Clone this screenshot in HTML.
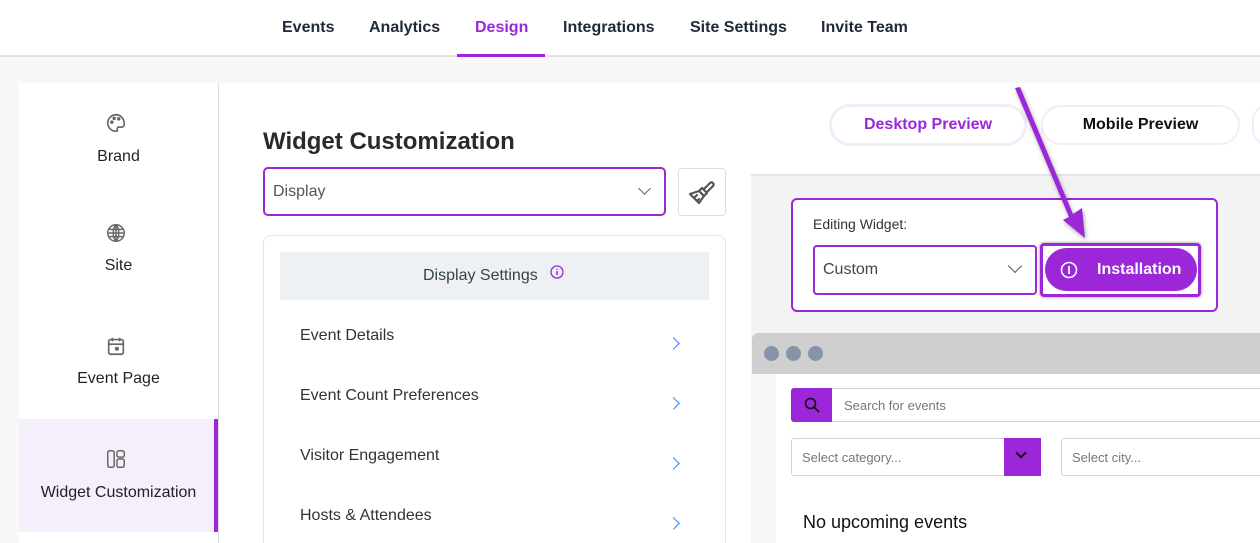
<!DOCTYPE html>
<html style="width:1260px;height:543px;overflow:hidden"><head><style>
*{box-sizing:border-box;margin:0;padding:0}
body{width:1260px;height:543px;overflow:hidden;background:#f8f8f9;font-family:"Liberation Sans",sans-serif;position:relative;color:#222}
.abs{position:absolute}
.nav{left:0;top:0;width:1260px;height:57px;background:#fff;border-bottom:2px solid #e3e3e3}
.nav span{position:absolute;top:19px;font-size:16px;font-weight:bold;color:#1f2937}
.side{left:19px;top:83px;width:200px;height:460px;background:#fff;border-right:1px solid #ddd}
.si{position:absolute;left:0;width:199px;text-align:center;font-size:16px;color:#222}
.mid{left:219px;top:83px;width:532px;height:460px;background:#fff}
.row{position:absolute;left:300px;font-size:16px;color:#333}
.chev{position:absolute;left:669px;width:9px;height:9px;border-right:1.8px solid #3b82f6;border-top:1.8px solid #3b82f6;transform:rotate(45deg)}
</style></head><body>
<div class="abs nav">
<span style="left:282px">Events</span>
<span style="left:369px">Analytics</span>
<span style="left:475px;color:#9b27d9">Design</span>
<span style="left:563px">Integrations</span>
<span style="left:690px">Site Settings</span>
<span style="left:821px">Invite Team</span>
<div class="abs" style="left:457px;top:54px;width:88px;height:3px;background:#9b27d9"></div>
</div>

<div class="abs side">
<svg class="abs" style="left:86px;top:29px" width="22" height="22" viewBox="0 0 24 24" fill="none" stroke="#666" stroke-width="1.8"><path d="M12 3a9 9 0 1 0 0 18c1.5 0 2-1 1.5-2-.6-1.2.2-2.5 1.5-2.5H18a3 3 0 0 0 3-3C21 7 17 3 12 3z"/><circle cx="7.5" cy="11" r="1" fill="#666"/><circle cx="10" cy="7" r="1" fill="#666"/><circle cx="15" cy="7.5" r="1" fill="#666"/></svg>
<div class="si" style="top:65px">Brand</div>
<svg class="abs" style="left:86px;top:139px" width="22" height="22" viewBox="0 0 24 24" fill="none" stroke="#666" stroke-width="1.6"><circle cx="12" cy="12" r="9"/><path d="M3 12h18M12 3v18M4.5 8h15M4.5 16h15M12 3c-4 4-4 14 0 18M12 3c4 4 4 14 0 18"/></svg>
<div class="si" style="top:174px">Site</div>
<svg class="abs" style="left:86px;top:252px" width="22" height="22" viewBox="0 0 24 24" fill="none" stroke="#666" stroke-width="1.8"><rect x="4" y="5" width="16" height="16" rx="2"/><path d="M8 3v4M16 3v4M4 10h16"/><circle cx="13" cy="15" r="1.3" fill="#666"/></svg>
<div class="si" style="top:287px">Event Page</div>
<div class="abs" style="left:0;top:336px;width:199px;height:113px;background:#f5eefb"></div>
<div class="abs" style="left:195px;top:336px;width:4px;height:113px;background:#9b27d9"></div>
<svg class="abs" style="left:86px;top:365px" width="22" height="22" viewBox="0 0 24 24" fill="none" stroke="#666" stroke-width="1.6"><rect x="3" y="3" width="7" height="18" rx="2"/><rect x="13" y="3" width="8" height="7" rx="2"/><rect x="13" y="12" width="8" height="9" rx="2"/></svg>
<div class="si" style="top:401px">Widget Customization</div>
</div>

<div class="abs mid"></div>
<div class="abs" style="left:263px;top:128px;font-size:24px;font-weight:bold;color:#2a2a2a">Widget Customization</div>
<div class="abs" style="left:263px;top:167px;width:403px;height:49px;border:2px solid #9b27d9;border-radius:5px;background:#fff"></div>
<div class="abs" style="left:273px;top:183px;font-size:16px;color:#555">Display</div>
<div class="abs" style="left:640px;top:184px;width:9px;height:9px;border-right:1.5px solid #666;border-bottom:1.5px solid #666;transform:rotate(45deg)"></div>
<div class="abs" style="left:678px;top:168px;width:48px;height:48px;border:1px solid #ddd;border-radius:4px;background:#fff"></div>
<svg class="abs" style="left:687px;top:177px" width="30" height="30" viewBox="0 0 30 30" fill="none" stroke="#555" stroke-width="2.2" stroke-linejoin="round" stroke-linecap="round"><path d="M17 12l6-6a2 2 0 0 1 3 3l-6 6"/><path d="M15 11l5 5-3 3-5-5z"/><path d="M12 14l5 5-5 7-9-9z"/><path d="M7 21l3-3M10 24l2-2"/></svg>
<div class="abs" style="left:263px;top:235px;width:463px;height:320px;border:1px solid #e5e5e5;border-radius:8px;background:#fff"></div>
<div class="abs" style="left:280px;top:252px;width:429px;height:48px;background:#eef1f4"></div>
<div class="abs" style="left:423px;top:267px;font-size:16px;color:#344">Display Settings</div>
<svg class="abs" style="left:550px;top:265px" width="14" height="14" viewBox="0 0 14 14"><circle cx="7" cy="7" r="6" fill="none" stroke="#9b27d9" stroke-width="1.3"/><path d="M7 6v4M7 3.6v1" stroke="#9b27d9" stroke-width="1.5"/></svg>
<div class="row" style="top:327px">Event Details</div><div class="chev" style="top:339px"></div>
<div class="row" style="top:387px">Event Count Preferences</div><div class="chev" style="top:399px"></div>
<div class="row" style="top:447px">Visitor Engagement</div><div class="chev" style="top:459px"></div>
<div class="row" style="top:507px">Hosts &amp; Attendees</div><div class="chev" style="top:519px"></div>

<div class="abs" style="left:751px;top:83px;width:509px;height:93px;background:#fff;border-bottom:2px solid #e5e5e5"></div>
<div class="abs" style="left:751px;top:177px;width:509px;height:366px;background:#f3f3f3"></div>
<div class="abs" style="left:829px;top:104px;width:198px;height:42px;border:3px solid #f3eafb;border-radius:21px;background:#fff;text-align:center;line-height:36px;font-size:16px;font-weight:bold;color:#9b27d9">Desktop Preview</div>
<div class="abs" style="left:1041px;top:105px;width:199px;height:40px;border:2px solid #f3eafb;border-radius:20px;background:#fff;text-align:center;line-height:36px;font-size:16px;font-weight:bold;color:#111">Mobile Preview</div>
<div class="abs" style="left:1252px;top:105px;width:30px;height:40px;border:2px solid #f3eafb;border-radius:20px;background:#fff"></div>

<div class="abs" style="left:791px;top:198px;width:427px;height:114px;border:2px solid #9b27d9;border-radius:6px;background:#fff"></div>
<div class="abs" style="left:813px;top:216px;font-size:14px;color:#333">Editing Widget:</div>
<div class="abs" style="left:813px;top:245px;width:224px;height:50px;border:2px solid #9b27d9;border-radius:4px;background:#fff"></div>
<div class="abs" style="left:823px;top:261px;font-size:16px;color:#444">Custom</div>
<div class="abs" style="left:1010px;top:261px;width:10px;height:10px;border-right:1.5px solid #555;border-bottom:1.5px solid #555;transform:rotate(45deg)"></div>
<div class="abs" style="left:1040px;top:243px;width:161px;height:54px;border:3px solid #9b27d9;border-radius:4px;box-shadow:0 0 3px #888"></div>
<div class="abs" style="left:1045px;top:248px;width:152px;height:43px;border-radius:22px;background:#9b27d9;color:#fff;font-weight:bold;font-size:16px;line-height:43px;padding-left:52px">Installation</div>
<svg class="abs" style="left:1060px;top:261px" width="18" height="18" viewBox="0 0 18 18"><circle cx="9" cy="9" r="7.5" fill="none" stroke="#fff" stroke-width="1.6"/><path d="M9 5v8" stroke="#fff" stroke-width="1.8"/></svg>

<div class="abs" style="left:752px;top:333px;width:508px;height:210px;background:#fff;border-radius:6px 0 0 0"></div>
<div class="abs" style="left:752px;top:333px;width:508px;height:41px;background:#cfcfcf;border-radius:6px 0 0 0"></div>
<div class="abs" style="left:764px;top:346px;width:15px;height:15px;border-radius:50%;background:#8594a8"></div>
<div class="abs" style="left:786px;top:346px;width:15px;height:15px;border-radius:50%;background:#8594a8"></div>
<div class="abs" style="left:808px;top:346px;width:15px;height:15px;border-radius:50%;background:#8594a8"></div>
<div class="abs" style="left:752px;top:374px;width:24px;height:169px;background:#f6f6f6"></div>
<div class="abs" style="left:791px;top:388px;width:480px;height:34px;border:1px solid #cbd2dc;border-radius:3px;background:#fff"></div>
<div class="abs" style="left:791px;top:388px;width:41px;height:34px;background:#9b27d9;border-radius:3px 0 0 3px"></div>
<svg class="abs" style="left:803px;top:396px" width="18" height="18" viewBox="0 0 18 18" fill="none" stroke="#111" stroke-width="1.6"><circle cx="7.5" cy="7.5" r="5"/><path d="M11 11l5 5"/></svg>
<div class="abs" style="left:844px;top:398px;font-size:13px;color:#777">Search for events</div>
<div class="abs" style="left:791px;top:438px;width:250px;height:38px;border:1px solid #d5d5d5;border-radius:3px;background:#fff"></div>
<div class="abs" style="left:1004px;top:438px;width:37px;height:38px;background:#9b27d9"></div>
<div class="abs" style="left:1017px;top:449px;width:8px;height:8px;border-right:2px solid #111;border-bottom:2px solid #111;transform:rotate(45deg)"></div>
<div class="abs" style="left:802px;top:450px;font-size:13px;color:#777">Select category...</div>
<div class="abs" style="left:1061px;top:438px;width:210px;height:38px;border:1px solid #d5d5d5;border-radius:3px;background:#fff"></div>
<div class="abs" style="left:1072px;top:450px;font-size:13px;color:#777">Select city...</div>
<div class="abs" style="left:803px;top:512px;font-size:18px;color:#111">No upcoming events</div>

<svg class="abs" style="left:0;top:0;filter:drop-shadow(1px 2px 2px rgba(0,0,0,.35))" width="1260" height="543"><polygon points="1015,88 1020,87 1073,214 1082,208 1085,238 1063,220 1069,217" fill="#9b27d9"/></svg>
</body></html>
